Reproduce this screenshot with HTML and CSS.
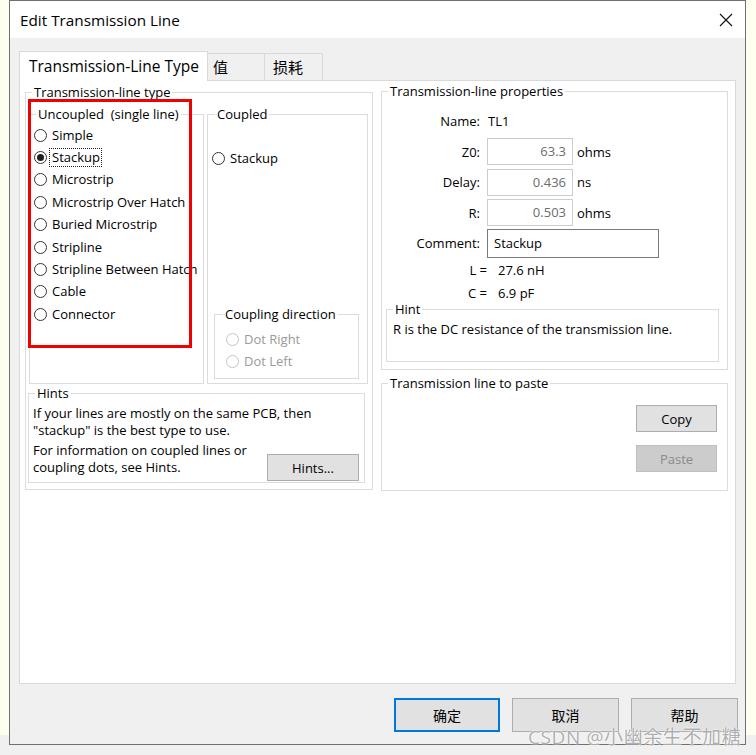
FILE: index.html
```html
<!DOCTYPE html>
<html>
<head>
<meta charset="utf-8">
<title>Edit Transmission Line</title>
<link rel="stylesheet" href="styles.css">
</head>
<body>
<div class="window">
  <div class="titlebar">
    <span class="title">Edit Transmission Line</span>
    <svg class="close" width="14" height="14" viewBox="0 0 14 14"><path d="M1 1 L13 13 M13 1 L1 13" stroke="#111" stroke-width="1.1" fill="none"/></svg>
  </div>
  <div class="client">
    <div class="tabs">
      <div class="tab active">Transmission-Line Type</div>
      <div class="tab t2">值</div>
      <div class="tab t3">损耗</div>
    </div>
    <div class="panel">
      <div class="col-left">
        <div class="grp grp-type">
          <span class="grp-title">Transmission-line type</span>
          <div class="type-row">
            <div class="grp grp-uncoupled">
              <span class="grp-title">Uncoupled&nbsp; (single line)</span>
              <div class="radio-list">
                <div class="opt"><span class="radio"></span><span class="lbl">Simple</span></div>
                <div class="opt"><span class="radio checked"></span><span class="lbl focus">Stackup</span></div>
                <div class="opt"><span class="radio"></span><span class="lbl">Microstrip</span></div>
                <div class="opt"><span class="radio"></span><span class="lbl">Microstrip Over Hatch</span></div>
                <div class="opt"><span class="radio"></span><span class="lbl">Buried Microstrip</span></div>
                <div class="opt"><span class="radio"></span><span class="lbl">Stripline</span></div>
                <div class="opt"><span class="radio"></span><span class="lbl">Stripline Between Hatch</span></div>
                <div class="opt"><span class="radio"></span><span class="lbl">Cable</span></div>
                <div class="opt"><span class="radio"></span><span class="lbl">Connector</span></div>
              </div>
            </div>
            <div class="grp grp-coupled">
              <span class="grp-title">Coupled</span>
              <div class="opt coupled-opt"><span class="radio"></span><span class="lbl">Stackup</span></div>
              <div class="grp grp-dir">
                <span class="grp-title">Coupling direction</span>
                <div class="dir-list">
                  <div class="opt disabled"><span class="radio"></span><span class="lbl">Dot Right</span></div>
                  <div class="opt disabled"><span class="radio"></span><span class="lbl">Dot Left</span></div>
                </div>
              </div>
            </div>
          </div>
          <div class="grp grp-hints">
            <span class="grp-title">Hints</span>
            <p class="hint-p1">If your lines are mostly on the same PCB, then<br>"stackup" is the best type to use.</p>
            <div class="hint-row">
              <p class="hint-p2">For information on coupled lines or<br>coupling dots, see Hints.</p>
              <div class="btn hints-btn">Hints...</div>
            </div>
          </div>
        </div>
      </div>
      <div class="col-right">
        <div class="grp grp-props">
          <span class="grp-title">Transmission-line properties</span>
          <div class="props">
            <span class="plabel">Name:</span><span class="pvalue">TL1</span><span></span>
            <span class="plabel">Z0:</span><span class="field">63.3</span><span class="unit">ohms</span>
            <span class="plabel">Delay:</span><span class="field">0.436</span><span class="unit">ns</span>
            <span class="plabel">R:</span><span class="field">0.503</span><span class="unit">ohms</span>
            <span class="plabel">Comment:</span><span class="field comment">Stackup</span>
          </div>
          <div class="lc">
            <div class="lc-row"><span class="lc-label">L =</span><span class="lc-val">27.6 nH</span></div>
            <div class="lc-row"><span class="lc-label">C =</span><span class="lc-val">6.9 pF</span></div>
          </div>
          <div class="grp grp-hint">
            <span class="grp-title">Hint</span>
            <p class="hint-text">R is the DC resistance of the transmission line.</p>
          </div>
        </div>
        <div class="grp grp-paste">
          <span class="grp-title">Transmission line to paste</span>
          <div class="btn copy-btn">Copy</div>
          <div class="btn paste-btn disabled">Paste</div>
        </div>
      </div>
    </div>
    <div class="buttons">
      <div class="btn dlg-btn default">确定</div>
      <div class="btn dlg-btn">取消</div>
      <div class="btn dlg-btn">帮助</div>
    </div>
  </div>
</div>
<div class="annot"></div>
<div class="watermark">CSDN @小幽余生不加糖</div>
</body>
</html>
```

FILE: styles.css
```css
* { box-sizing: border-box; }
html, body { margin: 0; padding: 0; }
body {
  width: 756px;
  height: 755px;
  overflow: hidden;
  position: relative;
  background: linear-gradient(#fffff0 0, #fffff0 735px, #f0f0f0 735px);
  font-family: "Open Sans", "Noto Sans CJK SC", sans-serif;
  font-size: 13px;
  color: #000;
}
p { margin: 0; }

.window {
  margin-left: 9px;
  width: 737px;
  height: 745px;
  border: 1px solid #707070;
  background: #f0f0f0;
  display: flex;
  flex-direction: column;
}
.titlebar {
  height: 37px;
  background: #fff;
  display: flex;
  align-items: center;
  padding-left: 10px;
  flex: none;
}
.title { font-size: 15.3px; }
.close { margin-left: auto; margin-right: 12px; }

.client {
  flex: 1;
  padding: 13px 8px 0 9px;
  display: flex;
  flex-direction: column;
}
.tabs {
  display: flex;
  height: 29px;
  flex: none;
}
.tab {
  font-size: 15px;
  line-height: 26px;
  border: 1px solid #d9d9d9;
  border-bottom: none;
  background: #f0f0f0;
  margin-top: 2px;
  height: 27px;
  white-space: nowrap;
}
.tab.active {
  position: relative;
  z-index: 1;
  background: #fff;
  margin-top: 0;
  height: 30px;
  width: 189px;
  line-height: 28px;
  padding-left: 9px;
  font-size: 15.5px;
}
.t2 { width: 58px; margin-left: -1px; padding-left: 5px; }
.t3 { width: 59px; margin-left: -1px; padding-left: 8px; }

.panel {
  width: 717px;
  height: 604px;
  flex: none;
  background: #fff;
  border: 1px solid #d9d9d9;
  display: flex;
  align-items: flex-start;
  padding: 0 7px 0 5px;
  gap: 8px;
}

/* group box */
.grp { border: 1px solid #dcdcdc; background: #fff; }
.grp-title {
  display: block;
  width: max-content;
  margin: -9px 0 0 6px;
  padding: 0 2px;
  background: #fff;
  line-height: 16px;
  height: 16px;
  white-space: nowrap;
}

.col-left { margin-top: 11px; }
.grp-type { width: 348px; height: 398px; }
.type-row { display: flex; margin-top: 14px; }
.grp-uncoupled { width: 175px; height: 270px; margin-left: 3px; }
.grp-coupled {
  width: 161px; height: 270px; margin-left: 3px;
  display: flex; flex-direction: column;
}
.grp-coupled > .grp-title { margin-left: 7px; }

.radio-list { padding: 2px 0 0 4px; }
.opt {
  display: flex;
  align-items: center;
  height: 22.4px;
  white-space: nowrap;
}
.radio {
  width: 13px;
  height: 13px;
  border: 1px solid #333;
  border-radius: 50%;
  background: #fff;
  flex: none;
  display: flex;
  align-items: center;
  justify-content: center;
  margin-right: 5px;
}
.radio.checked::after {
  content: "";
  width: 7px;
  height: 7px;
  border-radius: 50%;
  background: #1e1e1e;
}
.lbl { line-height: 17px; }
.focus { outline: 1px dotted #222; outline-offset: 0; margin-left: -2px; padding: 0 1px 0 2px; }

.coupled-opt { margin-top: 25px; padding-left: 4px; }
.grp-dir {
  width: 145px; height: 65px;
  margin: auto 0 4px 6px;
}
.grp-dir > .grp-title { margin-left: 8px; }
.dir-list { padding: 6px 0 0 11px; }
.opt.disabled { height: 22px; color: #9a9a9a; }
.opt.disabled .radio { border-color: #c4c4c4; }

.grp-hints { width: 337px; height: 90px; margin: 9px 0 0 2px; }
.hint-p1 { line-height: 17px; padding: 4px 0 0 4px; }
.hint-row { display: flex; margin-top: 3px; }
.hint-p2 { line-height: 17px; padding-left: 4px; }
.btn {
  background: #e1e1e1;
  border: 1px solid #adadad;
  display: flex;
  align-items: center;
  justify-content: center;
}
.hints-btn { width: 92px; height: 27px; margin: 12px 5px 0 auto; }

.col-right { margin-top: 10px; display: flex; flex-direction: column; }
.grp-props { width: 347px; height: 279px; }
.props {
  display: grid;
  grid-template-columns: 105px 86px auto;
  grid-auto-rows: 27px;
  column-gap: 0;
  row-gap: 3.5px;
  margin-top: 8.5px;
  align-items: center;
}
.plabel { text-align: right; padding-right: 7px; grid-column: 1; }
.plabel, .pvalue, .unit { line-height: 16px; }
.pvalue { padding-left: 1px; }
.field {
  height: 27px;
  border: 1px solid #cccccc;
  color: #6d6d6d;
  text-align: right;
  padding-right: 6px;
  line-height: 25px;
  background: #fff;
}
.unit { padding-left: 4px; }
.field.comment {
  grid-column: 2 / 4;
  width: 172px;
  height: 29px;
  border-color: #7a7a7a;
  color: #000;
  text-align: left;
  padding-left: 6px;
  line-height: 27px;
}
.lc { margin-top: 2px; }
.lc-row { display: flex; height: 23px; align-items: center; }
.lc-label { width: 106px; text-align: right; padding-right: 1px; }
.lc-val { margin-left: 10px; }

.grp-hint { width: 333px; height: 53px; margin: 4.5px 0 0 4px; }
.hint-text { padding: 4px 0 0 6px; line-height: 16px; }

.grp-paste {
  width: 347px; height: 108px; margin-top: 13px;
  display: flex; flex-direction: column; align-items: flex-end;
}
.grp-paste > .grp-title { align-self: flex-start; }
.copy-btn { width: 81px; height: 27px; margin: 14px 10px 0 0; }
.paste-btn { width: 81px; height: 27px; margin: 13px 10px 0 0; }
.btn.disabled { background: #cccccc; border-color: #bfbfbf; color: #8a8a8a; }

.buttons {
  display: flex;
  justify-content: flex-end;
  gap: 12px;
  margin: 14px -1px 0 0;
}
.dlg-btn { width: 107px; height: 34px; font-size: 14px; }
.dlg-btn.default { width: 106px; border: 2px solid #0078d7; }

.annot {
  position: absolute;
  left: 28px;
  top: 99px;
  width: 164px;
  height: 249px;
  border: 3px solid #f00000;
}
.watermark {
  position: absolute;
  left: 528px;
  top: 725px;
  font-size: 19px;
  line-height: 24px;
  color: rgba(120, 120, 120, 0.6);
  text-shadow: 0 0 1px #fff, 0 0 2px #fff;
  white-space: nowrap;
  letter-spacing: 0.6px;
}
```
